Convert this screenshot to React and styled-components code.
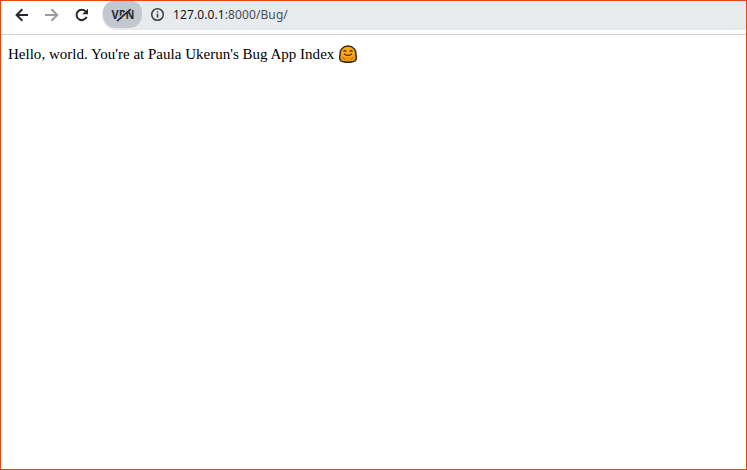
import React from "react";
import styled, { createGlobalStyle } from "styled-components";

const GlobalStyle = createGlobalStyle`
  * { box-sizing: border-box; }
  body { margin: 0; background: #fff; }
`;

const Window = styled.div`
  width: 747px;
  height: 470px;
  border: 1px solid #e04a10;
  background: #fff;
  overflow: hidden;
`;

const Toolbar = styled.header`
  display: flex;
  height: 34px;
  border-bottom: 1px solid #d3d4d6;
`;

const Navigation = styled.nav`
  display: flex;
  align-items: center;
  width: 101px;
  height: 27px;
  padding-left: 12px;
  gap: 12px;
`;

const NavButton = styled.button`
  display: flex;
  padding: 0;
  border: 0;
  background: none;
  color: ${(p) => (p.$muted ? "#999b9e" : "#25282c")};
`;

const AddressBar = styled.div`
  display: flex;
  flex: 1;
  height: 29px;
  background: #e7ebee;
  border-radius: 14px 0 0 14px;
`;

const VpnBadge = styled.div`
  display: flex;
  align-items: center;
  justify-content: center;
  width: 39px;
  height: 27px;
  margin-left: 1px;
  border-radius: 11px 11px 13px 13px;
  background: #c3c7cf;
`;

const InfoButton = styled(NavButton)`
  height: 27px;
  align-items: center;
  margin-left: 8px;
  color: #3b3e42;
`;

const Url = styled.span`
  height: 27px;
  margin-left: 8px;
  font: 12px/27px "Noto Sans", sans-serif;
  letter-spacing: 0.1px;
  color: #4b4e52;
  white-space: nowrap;
`;

const Host = styled.span`
  color: #111316;
`;

const Page = styled.main`
  padding: 9px 7px;
  color: #000;
`;

const Message = styled.p`
  display: flex;
  align-items: center;
  gap: 4px;
  margin: 0;
  font: 15px/20px "Liberation Serif", serif;
  letter-spacing: 0.01px;
  white-space: nowrap;
`;

function Arrow({ flip }) {
  return (
    <svg width="18" height="18" viewBox="0 0 18 18" fill="none" stroke="currentColor" strokeWidth="2">
      <path d={flip ? "M2 9h12M8.5 3.2 14.2 9l-5.7 5.8" : "M15 9H3M9.3 3.2 3.6 9l5.7 5.8"} />
    </svg>
  );
}

function Reload() {
  return (
    <svg width="18" height="18" viewBox="0 0 18 18" fill="none">
      <path d="M12.6 5.4A5.2 5.2 0 1 0 13.6 10.8" stroke="currentColor" strokeWidth="2" />
      <path d="M15 2.8V8.3H9.3Z" fill="currentColor" />
    </svg>
  );
}

const VpnText = styled.text`
  font: bold 12px "Open Sans", sans-serif;
  fill: #292c31;
`;

function VpnOff() {
  return (
    <svg width="26" height="18" viewBox="0 0 26 18">
      <VpnText x="1.5" y="13" textLength="23" lengthAdjust="spacingAndGlyphs">VPN</VpnText>
      <path d="M8 12.6 20 2.2" stroke="#c3c7cf" strokeWidth="1.2" />
      <path d="M7 15.2 20.8 3.2" stroke="#292c31" strokeWidth="1.7" />
    </svg>
  );
}

function Info() {
  return (
    <svg width="15" height="15" viewBox="0 0 15 15" fill="none" stroke="currentColor">
      <circle cx="7.5" cy="7.5" r="5.8" strokeWidth="1.5" />
      <path d="M7.5 6.8v3.8M7.5 4.2v1.4" strokeWidth="1.6" />
    </svg>
  );
}

const Emoji = styled.svg`
  width: 18px;
  height: 18px;
  margin: 0 0 1px 1px;
`;

function HuggingFace() {
  return (
    <Emoji viewBox="0 0 18 18">
      <path
        d="M1.2 10C.4 5 4 1 9 1s8.6 4 7.8 9c.8 2 .7 4.5-.5 5.6C14.8 16.8 12 17.2 9 17.2s-5.8-.4-7.3-1.6C.5 14.5.4 12 1.2 10Z"
        fill="#faa71b"
        stroke="#302a20"
        strokeWidth="1.5"
      />
      <path d="M2 10.5C5 13 13 13 16 10.5v4.8q-7 1.6-14 0Z" fill="#ed930e" />
      <path
        d="M4.5 6.5q1.4-1.7 2.8 0M10.7 6.5q1.4-1.7 2.8 0M5 8.7q4 3.4 8 0"
        fill="none"
        stroke="#573408"
        strokeWidth="1.2"
      />
      <path d="m4 12 2 3M14 12l-2 3" fill="none" stroke="#b66b08" strokeWidth="0.8" />
    </Emoji>
  );
}

export default function App() {
  return (
    <>
      <GlobalStyle />
      <Window>
        <Toolbar>
          <Navigation>
            <NavButton aria-label="Back"><Arrow /></NavButton>
            <NavButton $muted aria-label="Forward"><Arrow flip /></NavButton>
            <NavButton aria-label="Reload"><Reload /></NavButton>
          </Navigation>
          <AddressBar>
            <VpnBadge><VpnOff /></VpnBadge>
            <InfoButton aria-label="Site information"><Info /></InfoButton>
            <Url><Host>127.0.0.1</Host>:8000/Bug/</Url>
          </AddressBar>
        </Toolbar>
        <Page>
          <Message>
            <span>Hello, world. You're at Paula Ukerun's Bug App Index</span>
            <HuggingFace />
          </Message>
        </Page>
      </Window>
    </>
  );
}
